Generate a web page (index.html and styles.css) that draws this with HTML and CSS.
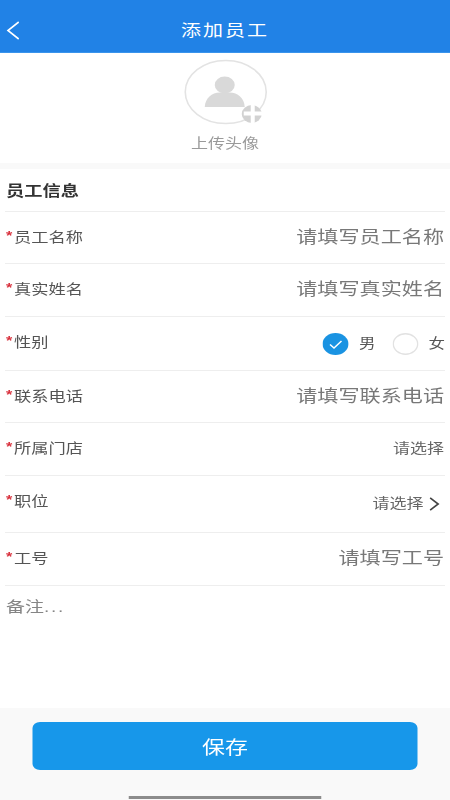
FILE: index.html
```html
<!DOCTYPE html>
<html lang="zh">
<head>
<meta charset="utf-8">
<title>添加员工</title>
<link rel="stylesheet" href="styles.css">
</head>
<body>
<div class="page">
  <header class="topbar">
    <svg class="back" viewBox="0 0 16 20" preserveAspectRatio="none"><path d="M14.5 1 L2 10 L14.5 19" fill="none" stroke="#fff" stroke-width="1.8"/></svg>
    <h1 class="title">添加员工</h1>
  </header>
  <section class="avatar">
    <svg class="avatar-pic" viewBox="0 0 84 66" preserveAspectRatio="none">
      <ellipse cx="42" cy="33" rx="40.5" ry="31.5" fill="#fff" stroke="#e3e3e3" stroke-width="1.6"/>
      <ellipse cx="41" cy="26" rx="10" ry="8.5" fill="#d9d9d9"/>
      <path d="M21 48 C21.5 39 28 33.5 36 33.5 L46 33.5 C54 33.5 60.5 39 61 48 Z" fill="#d9d9d9"/>
      <ellipse cx="68" cy="55" rx="10" ry="9" fill="#d2d2d2"/>
      <path d="M69 46 V64 M60 54.5 H80" stroke="#fff" stroke-width="4" fill="none"/>
    </svg>
    <div class="avatar-text">上传头像</div>
  </section>
  <h2 class="section-title">员工信息</h2>
  <div class="row row-52"><span class="label"><i>*</i>员工名称</span><span class="value">请填写员工名称</span></div>
  <div class="row row-53"><span class="label"><i>*</i>真实姓名</span><span class="value">请填写真实姓名</span></div>
  <div class="row row-54"><span class="label label-tight"><i>*</i>性别</span>
    <span class="gender">
      <svg class="radio" viewBox="0 0 26 22" preserveAspectRatio="none"><ellipse cx="13" cy="11" rx="13" ry="11" fill="#1a93e2"/><path d="M7.5 11.5 L11.5 15 L19 8" fill="none" stroke="#fff" stroke-width="1.5"/></svg>
      <span class="gender-text">男</span>
      <svg class="radio radio-off" viewBox="0 0 26 22" preserveAspectRatio="none"><ellipse cx="13" cy="11" rx="12.2" ry="10.2" fill="#fff" stroke="#e2e2e2" stroke-width="1.4"/></svg>
      <span class="gender-text">女</span>
    </span>
  </div>
  <div class="row row-52"><span class="label"><i>*</i>联系电话</span><span class="value">请填写联系电话</span></div>
  <div class="row row-53"><span class="label"><i>*</i>所属门店</span><span class="select">请选择</span></div>
  <div class="row row-57"><span class="label label-up"><i>*</i>职位</span>
    <span class="select select-arrow">请选择<svg class="chevron" viewBox="0 0 12 15" preserveAspectRatio="none"><path d="M1.5 1 L10 7.5 L1.5 14" fill="none" stroke="#444" stroke-width="1.8"/></svg></span>
  </div>
  <div class="row row-53"><span class="label"><i>*</i>工号</span><span class="value">请填写工号</span></div>
  <div class="remark">备注<span class="dots">...</span></div>
  <footer class="footer">
    <button class="save">保存</button>
    <div class="home-bar"></div>
  </footer>
</div>
</body>
</html>
```
FILE: styles.css
```css
* { box-sizing: border-box; }
html, body { margin: 0; padding: 0; width: 450px; height: 800px; overflow: hidden; background: #fff; }
.page {
  width: 360px;
  height: 800px;
  transform: scaleX(1.25);
  transform-origin: left top;
  display: flex;
  flex-direction: column;
  font-family: "Liberation Sans", "Noto Sans CJK SC", sans-serif;
  filter: blur(0.35px);
}
.topbar {
  height: 53px;
  flex: none;
  background: #2182e6;
  border-bottom: 1px solid #3a94ec;
  position: relative;
  display: flex;
  align-items: center;
  justify-content: center;
  padding-top: 9px;
}
.back { position: absolute; left: 5px; top: 21px; width: 11px; height: 19px; }
.title { margin: 0; font-size: 16px; font-weight: 400; color: #fff; letter-spacing: 1.6px; line-height: 20px; }
.avatar {
  height: 110px;
  flex: none;
  display: flex;
  flex-direction: column;
  align-items: center;
  padding-top: 6px;
}
.avatar-pic { width: 67.2px; height: 66px; display: block; margin-left: 1px; }
.avatar-text { margin-top: 9px; font-size: 13.6px; line-height: 20px; color: #9a9a9a; }
.section-title {
  flex: none;
  margin: 0;
  height: 48px;
  padding: 8px 4.8px 0;
  background: linear-gradient(#f9f9f9 6px, #fff 6px);
  font-size: 14.6px;
  line-height: 40px;
  font-weight: 700;
  color: #333;
  display: flex;
  align-items: center;
}
.row {
  flex: none;
  margin: 0 4px;
  padding: 0 0.8px;
  border-top: 1px solid #eeeeee;
  display: flex;
  align-items: center;
  justify-content: space-between;
}
.row-52 { height: 52px; }
.row-53 { height: 53px; }
.row-54 { height: 54px; }
.row-57 { height: 57px; }
.label { font-size: 13.8px; color: #555; line-height: 20px; }
.label-up { margin-bottom: 5px; }
.label-tight { margin-bottom: 2px; }
.label i { font-style: normal; font-weight: 700; color: #d8303c; font-size: 13px; line-height: 1; margin-right: 1.4px; vertical-align: 2px; }
.value { font-size: 16.9px; color: #787878; line-height: 24px; }
.select { font-size: 13.6px; color: #666; line-height: 20px; }
.select-arrow { display: flex; align-items: center; gap: 4.5px; margin-right: 3px; }
.chevron { width: 9px; height: 14px; }
.gender { display: flex; align-items: center; margin-right: -0.8px; }
.radio { width: 20.8px; height: 22px; display: block; }
.radio-off { margin-left: 13.6px; }
.gender-text { margin-left: 8px; font-size: 13.2px; color: #555; line-height: 20px; }
.remark {
  flex: 1;
  margin: 0 4px;
  padding: 9px 0.8px 0;
  border-top: 1px solid #eeeeee;
  font-size: 15.2px;
  line-height: 24px;
  color: #858585;
}
.dots { letter-spacing: 1.4px; }
.footer {
  flex: none;
  height: 92px;
  background: #f9f9f9;
  padding-top: 14px;
  display: flex;
  flex-direction: column;
  align-items: center;
}
.save {
  width: 307.2px;
  height: 48px;
  border: 0;
  border-radius: 6px;
  background: #1797ea;
  color: #fff;
  font-family: inherit;
  font-size: 18.4px;
  padding: 0;
}
.home-bar { margin-top: 26px; width: 153.6px; height: 3px; background: #8c8c8c; }
```
